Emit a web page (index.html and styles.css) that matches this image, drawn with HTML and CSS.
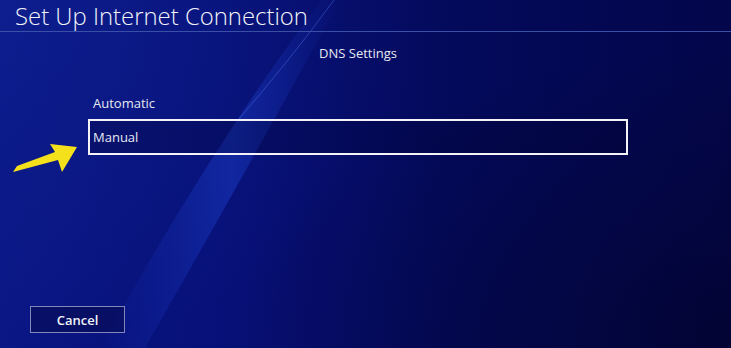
FILE: index.html
```html
<!DOCTYPE html>
<html>
<head>
<meta charset="utf-8">
<link rel="stylesheet" href="styles.css">
</head>
<body>
<div class="screen">
  <svg class="bg" width="731" height="348" viewBox="0 0 731 348">
    <defs>
      <linearGradient id="band" x1="0" y1="0" x2="1" y2="0">
        <stop offset="0" stop-color="#1a3cd0" stop-opacity="0"/>
        <stop offset="0.55" stop-color="#1f46d8" stop-opacity="0.4"/>
        <stop offset="1" stop-color="#1a3cd0" stop-opacity="0"/>
      </linearGradient>
    </defs>
    <path d="M322 0 L340 0 Q275 120 145 348 L100 348 Q215 140 322 0 Z" fill="url(#band)"/>
    <path d="M334 0 Q290 60 238 120" stroke="#4a6ae0" stroke-width="1" fill="none" opacity="0.5"/>
  </svg>
  <header class="header">
    <h1 class="title">Set Up Internet Connection</h1>
  </header>
  <main class="content">
    <div class="column">
      <div class="subtitle">DNS Settings</div>
      <ul class="list">
        <li class="item">Automatic</li>
        <li class="item selected">Manual</li>
      </ul>
    </div>
  </main>
  <footer class="footer">
    <button class="btn">Cancel</button>
  </footer>
  <svg class="arrow" width="90" height="50" viewBox="0 135 90 50">
    <polygon points="13,172 17,166 55,152 50,144 77,147 62,172 58,160" fill="#f4e11c"/>
  </svg>
</div>
</body>
</html>
```
FILE: styles.css
```css
* { box-sizing: border-box; }
html, body { margin: 0; padding: 0; }
body { background: #04074f; }
.screen {
  position: relative;
  width: 731px;
  height: 348px;
  overflow: hidden;
  display: flex;
  flex-direction: column;
  font-family: "Open Sans", "Liberation Sans", sans-serif;
  color: #e6e8f2;
  background:
    radial-gradient(ellipse 420px 360px at 0px 0px, rgba(20, 45, 160, 0.35), rgba(20, 45, 160, 0) 100%),
    radial-gradient(ellipse 500px 300px at 731px 348px, rgba(1, 2, 30, 0.5), rgba(1, 2, 30, 0) 100%),
    linear-gradient(90deg, #0a1684 0%, #071078 30%, #040a5c 60%, #03064a 100%);
}
.bg { position: absolute; left: 0; top: 0; z-index: 0; }
.header {
  position: relative;
  z-index: 1;
  height: 32px;
  padding: 1px 0 0 15px;
  border-bottom: 1px solid #3a4fa6;
}
.title {
  margin: 0;
  font-weight: 300;
  font-size: 23.9px;
  line-height: 29px;
  color: #f2f3f8;
}
.content {
  position: relative;
  z-index: 1;
  padding-left: 88px;
}
.column { width: 540px; }
.subtitle {
  text-align: center;
  font-size: 13px;
  line-height: 18px;
  margin-top: 12px;
}
.list {
  list-style: none;
  margin: 21px 0 0 0;
  padding: 0;
}
.item {
  height: 36px;
  padding: 3px 0 0 3px;
  font-size: 13px;
  line-height: 30px;
  border: 2px solid transparent;
}
.item.selected {
  border-color: #f4f4f8;
  background: rgba(0, 0, 40, 0.25);
  padding-top: 1px;
}
.footer {
  position: relative;
  z-index: 1;
  margin-top: auto;
  padding: 0 0 15px 30px;
}
.btn {
  width: 95px;
  height: 27px;
  border: 1px solid #7f88b8;
  background: rgba(5, 8, 60, 0.4);
  color: #f2f3f8;
  font-family: "Open Sans", "Liberation Sans", sans-serif;
  font-size: 13px;
  font-weight: 600;
  padding: 0;
}
.arrow { position: absolute; left: 0; top: 135px; z-index: 2; }
```
